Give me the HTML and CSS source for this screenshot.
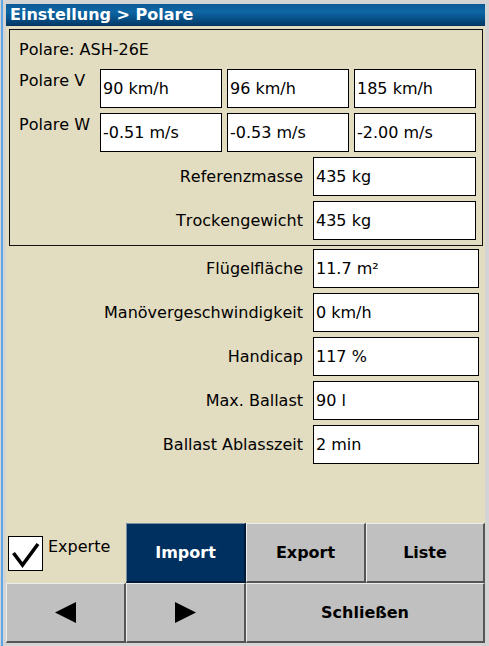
FILE: index.html
```html
<!DOCTYPE html>
<html lang="de">
<head>
<meta charset="utf-8">
<title>Einstellung &gt; Polare</title>
<link rel="stylesheet" href="styles.css">
</head>
<body>
<div class="window">
  <div class="titlebar">Einstellung &gt; Polare</div>
  <div class="panel">
    <div class="group">
      <div class="polar-name">Polare: ASH-26E</div>
      <div class="row triple">
        <div class="row-label">Polare V</div>
        <div class="field small">90 km/h</div>
        <div class="field small">96 km/h</div>
        <div class="field small">185 km/h</div>
      </div>
      <div class="row triple">
        <div class="row-label">Polare W</div>
        <div class="field small">-0.51 m/s</div>
        <div class="field small">-0.53 m/s</div>
        <div class="field small">-2.00 m/s</div>
      </div>
      <div class="row">
        <div class="label">Referenzmasse</div>
        <div class="field inner">435 kg</div>
      </div>
      <div class="row">
        <div class="label">Trockengewicht</div>
        <div class="field inner">435 kg</div>
      </div>
    </div>
    <div class="outer-rows">
      <div class="row">
        <div class="label">Flügelfläche</div>
        <div class="field outer">11.7 m²</div>
      </div>
      <div class="row">
        <div class="label">Manövergeschwindigkeit</div>
        <div class="field outer">0 km/h</div>
      </div>
      <div class="row">
        <div class="label">Handicap</div>
        <div class="field outer">117 %</div>
      </div>
      <div class="row">
        <div class="label">Max. Ballast</div>
        <div class="field outer">90 l</div>
      </div>
      <div class="row">
        <div class="label">Ballast Ablasszeit</div>
        <div class="field outer">2 min</div>
      </div>
    </div>
  </div>
  <div class="buttons">
    <div class="check-cell">
      <span class="checkbox">
        <svg width="33" height="33" viewBox="0 0 33 33"><polyline points="4.5,16 13.5,28 29,7" fill="none" stroke="#000" stroke-width="3.6" stroke-linejoin="miter" stroke-linecap="butt"/></svg>
      </span>
      <span class="check-label">Experte</span>
    </div>
    <div class="btn btn-active">Import</div>
    <div class="btn">Export</div>
    <div class="btn">Liste</div>
    <div class="btn"><svg width="21" height="21" viewBox="0 0 21 21"><polygon points="21,0 21,21 0,10.5" fill="#000"/></svg></div>
    <div class="btn"><svg width="21" height="21" viewBox="0 0 21 21"><polygon points="0,0 21,10.5 0,21" fill="#000"/></svg></div>
    <div class="btn span2">Schließen</div>
  </div>
</div>
</body>
</html>
```

FILE: styles.css
```css
* {
  box-sizing: border-box;
}

html, body {
  margin: 0;
  height: 646px;
  overflow: hidden;
}

body {
  padding: 4px 4px 3px 6px;
  background: linear-gradient(to right, #d4d4d4 0, #d4d4d4 1px, #5ea6e6 1px, #5ea6e6 3px, #d4d4d4 3px);
  font-family: "DejaVu Sans", "Liberation Sans", sans-serif;
  font-size: 16px;
  font-kerning: none;
  color: #000;
}

.window {
  width: 479px;
  height: 639px;
  display: flex;
  flex-direction: column;
}

.titlebar {
  height: 22px;
  line-height: 22px;
  padding-left: 4px;
  color: #fff;
  font-weight: bold;
  background: linear-gradient(to bottom, #0b5a94 0%, #0e66a4 35%, #07528a 65%, #003661 100%);
  white-space: nowrap;
}

.panel {
  flex: 1;
  background: #e2dcc1;
  padding: 3px 2px 0 3px;
  display: flex;
  flex-direction: column;
}

.group {
  border: 1px solid #111;
  padding: 10px 6px 5px 9px;
  display: flex;
  flex-direction: column;
  gap: 5px;
}

.polar-name {
  height: 19px;
  line-height: 19px;
  margin-bottom: 5px;
}

.row {
  display: flex;
  height: 39px;
  align-items: center;
}

.row-label {
  width: 81px;
  align-self: flex-start;
  padding-top: 2px;
  white-space: nowrap;
}

.triple {
  gap: 5px;
}

.triple .row-label {
  margin-right: -5px;
}

.label {
  flex: 1;
  text-align: right;
  padding-right: 10px;
  white-space: nowrap;
}

.field {
  height: 39px;
  line-height: 37px;
  border: 1px solid #000;
  background: #fff;
  padding-left: 2px;
  white-space: nowrap;
  overflow: hidden;
}

.field.small {
  width: 122px;
}

.field.inner {
  width: 163px;
}

.field.outer {
  width: 166px;
}

.outer-rows {
  margin-top: 3px;
  margin-right: 4px;
  display: flex;
  flex-direction: column;
  gap: 5px;
}

.buttons {
  display: grid;
  grid-template-columns: 120px 120px 120px 119px;
  grid-template-rows: 60px 60px;
  background: #e2dcc1;
}

.check-cell {
  display: flex;
  align-items: flex-start;
  padding: 13px 0 0 2px;
}

.checkbox {
  width: 35px;
  height: 35px;
  border: 1px solid #000;
  background: #fff;
  display: block;
}

.checkbox svg {
  display: block;
}

.check-label {
  margin-left: 5px;
  padding-top: 1px;
  line-height: 19px;
}

.btn {
  display: flex;
  align-items: center;
  justify-content: center;
  background: #c0c0c0;
  border-top: 1px solid #ececec;
  border-left: 1px solid #ececec;
  border-right: 2px solid #555;
  border-bottom: 2px solid #555;
  font-weight: bold;
  white-space: nowrap;
}

.btn svg {
  display: block;
}

.btn-active {
  background: #00305f;
  color: #fff;
  border-top-color: #7a8ea3;
  border-left-color: #7a8ea3;
  border-right-color: #001a35;
  border-bottom-color: #001a35;
}

.span2 {
  grid-column: span 2;
}
```
